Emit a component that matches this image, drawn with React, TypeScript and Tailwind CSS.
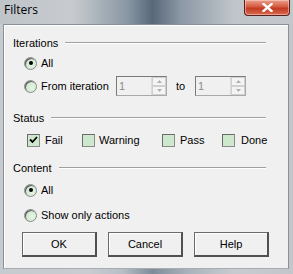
import React from "react";

const font = { fontFamily: "'Liberation Sans', Arial, sans-serif" };

function Radio({ checked }: { checked?: boolean }) {
  return (
    <div className="relative w-[13px] h-[13px] rounded-full border border-[#8a8a8a] bg-[radial-gradient(circle_at_65%_60%,#e6f5e6_0%,#cfe9cf_60%,#b8d8b8_100%)] flex items-center justify-center shrink-0 shadow-[inset_1px_1px_0_#5a5a5a]">
      {checked && <div className="w-[4px] h-[4px] rounded-full bg-black" />}
    </div>
  );
}

function Check({ checked }: { checked?: boolean }) {
  return (
    <div className="w-[13px] h-[13px] border border-[#8a8a8a] border-t-[#6a6a6a] border-l-[#6a6a6a] bg-[#cde8cd] shrink-0 flex items-center justify-center">
      {checked && (
        <svg width="9" height="8" viewBox="0 0 9 8">
          <path d="M1 3.5 L3.5 6 L8 1" stroke="#000" strokeWidth="1.8" fill="none" />
        </svg>
      )}
    </div>
  );
}

function Header({ label }: { label: string }) {
  return (
    <div className="flex items-center h-[14px] pl-[9px] pr-[22px]">
      <span className="text-[11px] leading-[14px] text-black whitespace-nowrap">{label}</span>
      <div className="flex-1 ml-[7px] h-[2px] border-t border-[#a0a0a0] border-b border-b-white" />
    </div>
  );
}

function Spin() {
  return (
    <div className="w-[51px] h-[20px] border border-[#a9a9a9] border-t-[#7a7a7a] border-l-[#7a7a7a] bg-[#f0f0f0] flex shrink-0">
      <div className="flex-1 text-[11px] leading-[18px] pl-[2px] text-[#8a8a8a]">1</div>
      <div className="w-[15px] flex flex-col border-l border-[#dcdcdc]">
        <div className="flex-1 border border-[#d0d0d0] bg-[#f4f4f4] flex items-center justify-center">
          <svg width="5" height="3" viewBox="0 0 5 3"><path d="M0 3 L2.5 0 L5 3 Z" fill="#b0b0b0" /></svg>
        </div>
        <div className="flex-1 border border-[#d0d0d0] bg-[#f4f4f4] flex items-center justify-center">
          <svg width="5" height="3" viewBox="0 0 5 3"><path d="M0 0 L2.5 3 L5 0 Z" fill="#b0b0b0" /></svg>
        </div>
      </div>
    </div>
  );
}

function Btn({ label }: { label: string }) {
  return (
    <div className="w-[75px] h-[25px] border border-[#6a6a6a] border-b-2 border-r-2 border-b-[#505050] border-r-[#505050] bg-[#f0f0f0] shadow-[inset_1px_1px_0_#ffffff] flex items-center justify-center text-[11px] text-black">
      {label}
    </div>
  );
}

export default function App() {
  return (
    <div
      className="w-[293px] h-[274px] flex flex-col bg-[linear-gradient(90deg,#c6cbd0_0%,#c9cdd1_30%,#b7bec6_42%,#7e8c9a_52%,#a9b2bb_64%,#c8ccd0_80%,#c3c7cb_100%)]"
      style={font}
    >
      <div className="h-[24px] flex justify-between bg-[linear-gradient(90deg,#bfc4c9_0%,#c7cbcf_25%,#8795a3_44%,#58687a_52%,#8c99a6_62%,#c0c5ca_80%,#c4c8cc_100%)]">
        <span className="text-[12px] leading-[12px] text-black pl-[4px] pt-[4px]" style={{ fontFamily: "'Open Sans','Liberation Sans',sans-serif" }}>Filters</span>
        <div className="mr-[3px] w-[46px] h-[16px] rounded-b-[4px] border border-[#5a2020] border-t-0 bg-[linear-gradient(180deg,#e9a08e_0%,#d45a40_45%,#c23a22_55%,#d86a50_100%)] flex items-center justify-center shadow-[inset_0_0_0_1px_rgba(255,220,210,0.5)]">
          <svg width="11" height="9" viewBox="0 0 11 9">
            <path d="M1.5 1 L9.5 8 M9.5 1 L1.5 8" stroke="#ffffff" strokeWidth="2.4" strokeLinecap="square" />
          </svg>
        </div>
      </div>
      <div className="ml-[3px] mr-[4px] h-[245px] bg-[#f0f0f0] border border-[#8a9098] border-b-[#a6acb2] shadow-[inset_1px_1px_0_#ffffff] flex flex-col">
        <div className="pt-[11px]">
          <Header label="Iterations" />
        </div>
        <div className="mt-[3px] h-[20px] flex items-center pl-[20px]">
          <Radio checked />
          <span className="ml-[4px] text-[11px] text-black">All</span>
        </div>
        <div className="mt-[3px] h-[20px] flex items-center pl-[20px]">
          <Radio />
          <span className="ml-[4px] w-[75px] text-[11px] text-black whitespace-nowrap">From iteration</span>
          <Spin />
          <span className="ml-[9px] w-[19px] text-[11px] text-black">to</span>
          <Spin />
        </div>
        <div className="mt-[15px]">
          <Header label="Status" />
        </div>
        <div className="mt-[7px] h-[16px] flex items-center pl-[23px]">
          <div className="w-[55px] flex items-center">
            <Check checked />
            <span className="ml-[5px] text-[11px] text-black">Fail</span>
          </div>
          <div className="w-[80px] flex items-center">
            <Check />
            <span className="ml-[4px] text-[11px] text-black">Warning</span>
          </div>
          <div className="w-[60px] flex items-center">
            <Check />
            <span className="ml-[5px] text-[11px] text-black">Pass</span>
          </div>
          <div className="flex items-center">
            <Check />
            <span className="ml-[6px] text-[11px] text-black">Done</span>
          </div>
        </div>
        <div className="mt-[13px]">
          <Header label="Content" />
        </div>
        <div className="mt-[5px] h-[20px] flex items-center pl-[20px]">
          <Radio checked />
          <span className="ml-[4px] text-[11px] text-black">All</span>
        </div>
        <div className="mt-[5px] h-[20px] flex items-center pl-[20px]">
          <Radio />
          <span className="ml-[4px] text-[11px] text-black">Show only actions</span>
        </div>
        <div className="mt-[7px] flex pl-[18px] gap-[11px]">
          <Btn label="OK" />
          <Btn label="Cancel" />
          <Btn label="Help" />
        </div>
      </div>
    </div>
  );
}
